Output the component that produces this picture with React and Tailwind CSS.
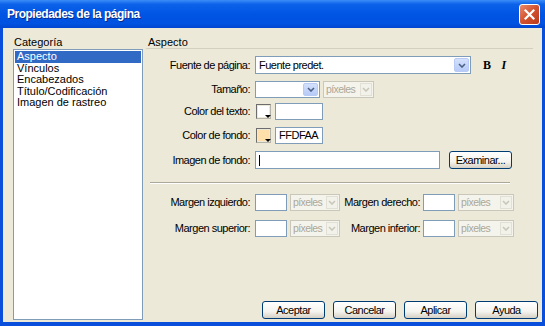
import React from 'react';

const font = { fontFamily: '"Liberation Sans", Arial, sans-serif' };
const serif = { fontFamily: '"Liberation Serif", "Times New Roman", serif' };

function Chevron({ color }) {
  return (
    <svg width="8" height="5" viewBox="0 0 8 5">
      <path d="M1 1 L4 4 L7 1" fill="none" stroke={color} strokeWidth="1.6" />
    </svg>
  );
}

function Select({ className, value, disabled }) {
  return disabled ? (
    <div className={`${className} relative h-full shrink-0 border border-[#c9c7ba] bg-[#f4f3ec] flex items-center pl-[2px] text-[#aca899] text-[10.5px] tracking-[-0.6px]`}>
      <span>{value}</span>
      <div className="absolute right-[1px] top-[1px] bottom-[1px] w-[12px] border border-[#e2e0d4] bg-[#f2f1ea] flex items-center justify-center">
        <Chevron color="#c9c7ba" />
      </div>
    </div>
  ) : (
    <div className={`${className} relative h-full shrink-0 border border-[#7f9db9] bg-white flex items-center pl-[3px]`}>
      <span>{value}</span>
      <div className="absolute right-[1px] top-[1px] bottom-[1px] w-[15px] rounded-[2px] border border-[#b8cbf6] bg-[linear-gradient(to_bottom,#d4e0fc,#b7cbf8)] flex items-center justify-center">
        <Chevron color="#4d6185" />
      </div>
    </div>
  );
}

function Input({ className, value, cursor }) {
  return (
    <div className={`${className} h-full shrink-0 border border-[#7f9db9] bg-white flex items-center pl-[3px]`}>
      {cursor && <div className="w-px h-[11px] bg-black" />}
      {value}
    </div>
  );
}

function Swatch({ fill }) {
  return (
    <div className="relative w-[15px] h-[15px] border-t border-l border-[#6d6d6d] border-r border-b border-r-[#b5b3a8] border-b-[#b5b3a8]">
      <div className={`w-[11px] h-[11px] m-[1px] ${fill}`} />
      <svg className="absolute right-[-1px] bottom-[-1px]" width="6" height="4" viewBox="0 0 6 4">
        <path d="M0 0 H6 L3 3 Z" fill="#000" />
      </svg>
    </div>
  );
}

function Label({ children, className }) {
  return <div className={`${className} text-right shrink-0 whitespace-nowrap`}>{children}</div>;
}

function Button({ children, className = 'w-[63px]' }) {
  return (
    <div className={`${className} h-[18px] shrink-0 rounded-[3px] border border-[#003c74] bg-[linear-gradient(to_bottom,#ffffff,#f4f3ee_60%,#d6d0c5)] flex items-center justify-center`}>
      {children}
    </div>
  );
}

export default function App() {
  return (
    <div className="w-[545px] h-[326px] bg-[#0a4fdc] flex flex-col text-[11px] tracking-[-0.5px] text-black" style={font}>
      {/* Title bar */}
      <div className="h-[28px] shrink-0 flex items-center pl-[7px] pr-[5px] bg-[linear-gradient(to_bottom,#3b8df7_0%,#0d62ea_15%,#0055e4_50%,#0052e0_85%,#0046cf_100%)]">
        <span className="flex-1 text-white font-bold text-[12px] tracking-[-0.5px] [text-shadow:1px_1px_#0b2a8c]">Propiedades de la página</span>
        <div className="w-[21px] h-[21px] rounded-[3px] border border-white bg-[linear-gradient(135deg,#ea8a6c,#d2512f_50%,#b8391a)] flex items-center justify-center">
          <svg width="11" height="11" viewBox="0 0 11 11">
            <path d="M1.5 1.5 L9.5 9.5 M9.5 1.5 L1.5 9.5" stroke="#fff" strokeWidth="2.2" strokeLinecap="square" />
          </svg>
        </div>
      </div>

      {/* Body */}
      <div className="flex-1 ml-[3px] mr-[3px] mb-[4px] bg-[#ece9d8] flex">
        {/* Category column */}
        <div className="pl-[10px] pt-[8px] pb-[2px] flex flex-col tracking-normal">
          <div className="h-[13px] leading-[13px] pl-[1px]">Categoría</div>
          <div className="w-[130px] flex-1 border border-[#7f9db9] bg-white p-[1px] leading-[11.5px]">
            <div className="bg-[#316ac5] text-white pl-[2px]">Aspecto</div>
            <div className="pl-[2px]">Vínculos</div>
            <div className="pl-[2px]">Encabezados</div>
            <div className="pl-[2px]">Título/Codificación</div>
            <div className="pl-[2px]">Imagen de rastreo</div>
          </div>
        </div>

        {/* Main column */}
        <div className="flex-1 ml-[3px] pt-[8px] flex flex-col">
          <div className="mr-[9px] h-[13px] leading-[13px] pl-[2px] border-b border-[#d4d0c0] tracking-normal">Aspecto</div>

          <div className="mt-[7px] h-[18px] flex items-center">
            <Label className="w-[104px]">Fuente de página:</Label>
            <div className="ml-[5px] h-full flex items-center">
              <Select className="w-[216px]" value="Fuente predet." />
              <span className="ml-[12px] font-bold text-[12px]" style={serif}>B</span>
              <span className="ml-[11px] font-bold italic text-[12px]" style={serif}>I</span>
            </div>
          </div>

          <div className="mt-[7px] h-[17px] flex items-center">
            <Label className="w-[104px]">Tamaño:</Label>
            <div className="ml-[5px] h-full flex items-center gap-[3px]">
              <Select className="w-[65px]" value="" />
              <Select className="w-[51px]" value="píxeles" disabled />
            </div>
          </div>

          <div className="mt-[5px] h-[17px] flex items-center">
            <Label className="w-[104px]">Color del texto:</Label>
            <div className="ml-[6px] h-full flex items-center gap-[4px]">
              <Swatch fill="bg-white" />
              <Input className="w-[48px]" value="" />
            </div>
          </div>

          <div className="mt-[7px] h-[17px] flex items-center">
            <Label className="w-[104px]">Color de fondo:</Label>
            <div className="ml-[6px] h-full flex items-center gap-[4px]">
              <Swatch fill="bg-[#ffdfaa]" />
              <Input className="w-[48px]" value="FFDFAA" />
            </div>
          </div>

          <div className="mt-[7px] h-[18px] flex items-center">
            <Label className="w-[104px]">Imagen de fondo:</Label>
            <div className="ml-[5px] h-full flex items-center">
              <Input className="w-[185px]" cursor />
              <Button className="ml-[9px] w-[63px]">Examinar...</Button>
            </div>
          </div>

          <div className="mt-[13px] ml-[4px] w-[360px] border-t border-[#aca899] border-b border-b-white" />

          <div className="mt-[10px] h-[17px] flex items-center">
            <Label className="w-[104px]">Margen izquierdo:</Label>
            <div className="ml-[5px] h-full flex items-center gap-[3px]">
              <Input className="w-[32px]" value="" />
              <Select className="w-[50px]" value="píxeles" disabled />
            </div>
            <Label className="w-[80px]">Margen derecho:</Label>
            <div className="ml-[3px] h-full flex items-center gap-[3px]">
              <Input className="w-[32px]" value="" />
              <Select className="w-[56px]" value="píxeles" disabled />
            </div>
          </div>

          <div className="mt-[9px] h-[17px] flex items-center">
            <Label className="w-[104px]">Margen superior:</Label>
            <div className="ml-[5px] h-full flex items-center gap-[3px]">
              <Input className="w-[32px]" value="" />
              <Select className="w-[50px]" value="píxeles" disabled />
            </div>
            <Label className="w-[80px]">Margen inferior:</Label>
            <div className="ml-[3px] h-full flex items-center gap-[3px]">
              <Input className="w-[32px]" value="" />
              <Select className="w-[56px]" value="píxeles" disabled />
            </div>
          </div>

          <div className="mt-auto mb-[3px] pr-[4px] flex justify-end gap-[8px]">
            <Button>Aceptar</Button>
            <Button>Cancelar</Button>
            <Button>Aplicar</Button>
            <Button>Ayuda</Button>
          </div>
        </div>
      </div>
    </div>
  );
}
